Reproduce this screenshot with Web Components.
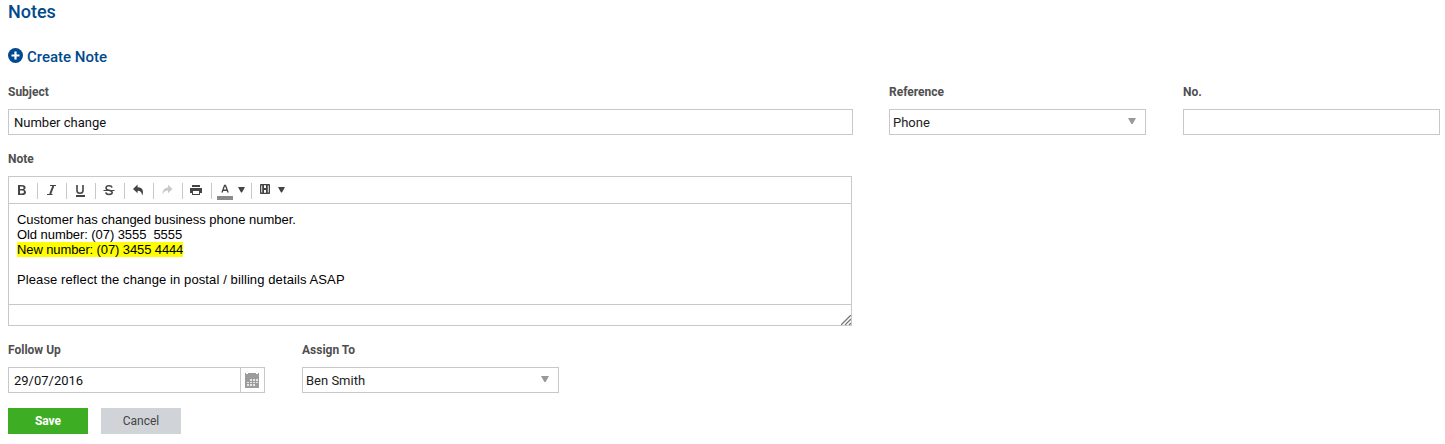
<!DOCTYPE html>
<html lang="en">
<head>
<meta charset="utf-8">
<title>Notes</title>
<style>
html,body{margin:0;background:#fff}
body{font-family:Roboto,"Liberation Sans",sans-serif;font-size:13px;color:#222;overflow:hidden}
</style>
</head>
<body>
<notes-page></notes-page>
<script>
const define = (name, html, setup) => customElements.define(name, class extends HTMLElement {
  connectedCallback() {
    if (this.shadowRoot) return;
    const t = document.createElement('template');
    t.innerHTML = html;
    this.attachShadow({ mode: 'open' }).append(t.content.cloneNode(true));
    if (setup) setup(this, this.shadowRoot);
  }
});

define('form-field', `<style>
  :host{display:block}
  .label{font-size:12px;font-weight:700;line-height:16px;color:#4f4f4f;margin-bottom:9px;white-space:nowrap}
</style><div class="label"></div><slot></slot>`, (h, r) => {
  r.querySelector('.label').textContent = h.getAttribute('label');
});

define('text-box', `<style>
  :host{display:flex;box-sizing:border-box;height:26px;border:1px solid #c8c8c8;padding:1px 5px 0;line-height:24px;font-size:13px;letter-spacing:0;color:#111;white-space:nowrap}
</style><slot></slot>`);

define('select-box', `<style>
  :host{display:flex;justify-content:space-between;box-sizing:border-box;height:26px;border:1px solid #c8c8c8;padding:1px 9px 0 3px;line-height:24px;font-size:13px;letter-spacing:0;color:#222}
  svg{margin-top:7px}
</style><span><slot></slot></span><svg width="8" height="6"><path d="M0 0H8L4.6 6H3.4Z" fill="#999"/></svg>`);

define('date-box', `<style>
  :host{display:flex;box-sizing:border-box;height:26px;border:1px solid #c8c8c8;font-size:13px;color:#111;line-height:24px}
  .v{flex:1;padding:1px 5px 0}
  .b{box-sizing:border-box;width:24px;border-left:1px solid #c8c8c8;padding:5px 0 0 4px}
  svg{display:block}
</style><span class="v"><slot></slot></span><span class="b"><svg width="14" height="15" shape-rendering="crispEdges">
<path d="M0 0H1V1H3V0H11V1H13V0H14V15H0Z" fill="#9c9c9c"/>
<path d="M5 6h2v2H5zM8 6h2v2H8zM11 6h2v2h-2zM2 9h2v1H2zM5 9h2v1H5zM8 9h2v1H8zM11 9h2v1h-2zM2 11h2v2H2zM5 11h2v2H5zM8 11h2v2H8z" fill="#e5e5e5"/></svg></span>`);

define('action-button', `<style>
  :host{display:block;width:80px;height:26px;line-height:26px;text-align:center;font-size:12px;background:#d0d4d8;color:#444}
  :host([primary]){background:#3dae23;color:#fff;font-weight:700}
</style><slot></slot>`);

define('tool-item', `<style>
  :host{display:flex;box-sizing:border-box;width:29px;height:16px;border-right:1px solid #c8c8c8}
  :host([wide]){width:40px}
  :host([last]){border-right:0}
</style><slot></slot>`);

define('note-editor', `<style>
  :host{display:flex;flex-direction:column;box-sizing:border-box;width:844px;height:150px;border:1px solid #c8c8c8}
  .bar{display:flex;box-sizing:border-box;height:27px;padding-top:6px;border-bottom:1px solid #c8c8c8}
  .body{flex:1;padding:8px 8px 0;font:13px/15px "Liberation Sans",Arial,sans-serif;color:#000;white-space:pre}
  .foot{height:20px;border-top:1px solid #c8c8c8;display:flex;justify-content:flex-end;align-items:flex-end}
  svg{display:block}
</style>
<div class="bar">
<tool-item><svg width="28" height="16"><path d="M9 2V12H13.2Q17 12 17 9.2Q17 7.4 15.2 6.8Q16.6 6.2 16.6 4.6Q16.6 2 13 2ZM11 3.6H13Q14.6 3.6 14.6 4.9Q14.6 6.1 13 6.1H11ZM11 7.6H13.2Q15 7.6 15 9Q15 10.4 13.2 10.4H11Z" fill="#444" fill-rule="evenodd"/></svg></tool-item>
<tool-item><svg width="28" height="16"><path d="M12 2.5H18M9 11.5H14.5" stroke="#444"/><path d="M15.3 3L12.2 11" stroke="#444" stroke-width="2"/></svg></tool-item>
<tool-item><svg width="28" height="16"><path d="M10 2V7.5Q10 10.3 13 10.3Q16 10.3 16 7.5V2" stroke="#444" stroke-width="1.6" fill="none"/><path d="M9 13H18" stroke="#444" stroke-width="2"/></svg></tool-item>
<tool-item><svg width="28" height="16"><path d="M16 4.6Q15.6 2.7 13 2.7Q10 2.7 10 4.9Q10 6.6 13 7.2Q16.2 7.9 16.2 9.6Q16.2 11.5 13 11.5Q10 11.5 9.8 9.4" stroke="#444" stroke-width="1.5" fill="none"/><path d="M7.5 7.5H18.5" stroke="#444"/></svg></tool-item>
<tool-item><svg width="28" height="16"><path d="M8 5.9L12.6 1.5V4.2Q18 4.3 18 9.2Q18 11 17 12.5Q17 7.8 12.6 7.8V10.3Z" fill="#444"/></svg></tool-item>
<tool-item><svg width="28" height="16"><path d="M18.5 5.9L14 1.7V4.4Q8.5 4.7 8.5 11.5Q10.2 7.6 14 7.6V10.2Z" fill="#c9c9c9"/></svg></tool-item>
<tool-item><svg width="28" height="16"><path d="M9 2H17V4H9ZM7 5H19V10H17V8H9V10H7ZM9 8H17V12H9Z" fill="#444"/><path d="M10 8H16V11H10Z" fill="#fff"/></svg></tool-item>
<tool-item wide><svg width="39" height="17" style="overflow:visible"><path d="M10 9.5L12.6 2.3H13.5L16.1 9.5M11 7.2H15.2" stroke="#444" stroke-width="1.35" fill="none"/><path d="M5 13H21V17H5Z" fill="#8a8a8a"/><path d="M26 4H33L30 9.5H29Z" fill="#444"/></svg></tool-item>
<tool-item wide last><svg width="39" height="16"><rect x="8" y="1" width="10" height="10" rx=".8" fill="#444"/><path d="M12 2.3H14V5H12ZM12 7H14V9.7H12ZM9.3 2.5H10.2V9.5H9.3ZM15.8 2.5H16.7V9.5H15.8Z" fill="#fff"/><path d="M26 4H33L30 9.5H29Z" fill="#444"/></svg></tool-item>
</div>
<div class="body"><slot></slot></div>
<div class="foot"><svg width="10" height="10"><path d="M0 10L10 0M4 10L10 4M8 10L10 8" stroke="#777" stroke-width="1.3"/></svg></div>`);

define('notes-page', `<style>
  :host{display:block;box-sizing:border-box;width:1445px;height:444px;padding-left:8px}
  h1,h2{margin:0;font-weight:500;color:#004a8c;line-height:24px}
  h1{font-size:18px;margin-bottom:21px}
  h2{font-size:15px;display:flex;margin-bottom:15px}
  h2 svg{margin:3px 4px 0 0}
  .row{display:flex;margin-bottom:16px}
  .row.dates{margin-bottom:15px;gap:37px}
  .s{width:845px;margin-right:36px}
  .r{width:257px;margin-right:37px}
  .n{width:257px}
  .actions{display:flex;gap:13px}
  mark{background:#ff0;color:#000;letter-spacing:-.11px}
  .a{letter-spacing:-.02px}
  .b{letter-spacing:-.07px}
  .c{letter-spacing:.105px}
</style>
<h1>Notes</h1>
<h2><svg width="15" height="15"><circle cx="7.5" cy="7.5" r="7.5" fill="#004990"/><path d="M7.5 3.5V11.5M3.5 7.5H11.5" stroke="#fff" stroke-width="2.2"/></svg><span>Create Note</span></h2>
<div class="row">
  <form-field class="s" label="Subject"><text-box>Number change</text-box></form-field>
  <form-field class="r" label="Reference"><select-box>Phone</select-box></form-field>
  <form-field class="n" label="No."><text-box></text-box></form-field>
</div>
<div class="row"><form-field label="Note"><note-editor><span class="a">Customer has changed business phone number.</span>
<span class="b">Old number: (07) 3555&nbsp; 5555</span>
<mark>New number: (07) 3455 4444</mark>

<span class="c">Please reflect the change in postal / billing details ASAP</span></note-editor></form-field></div>
<div class="row dates">
  <form-field class="n" label="Follow Up"><date-box>29/07/2016</date-box></form-field>
  <form-field class="n" label="Assign To"><select-box>Ben Smith</select-box></form-field>
</div>
<div class="actions"><action-button primary>Save</action-button><action-button>Cancel</action-button></div>`);
</script>
</body>
</html>
